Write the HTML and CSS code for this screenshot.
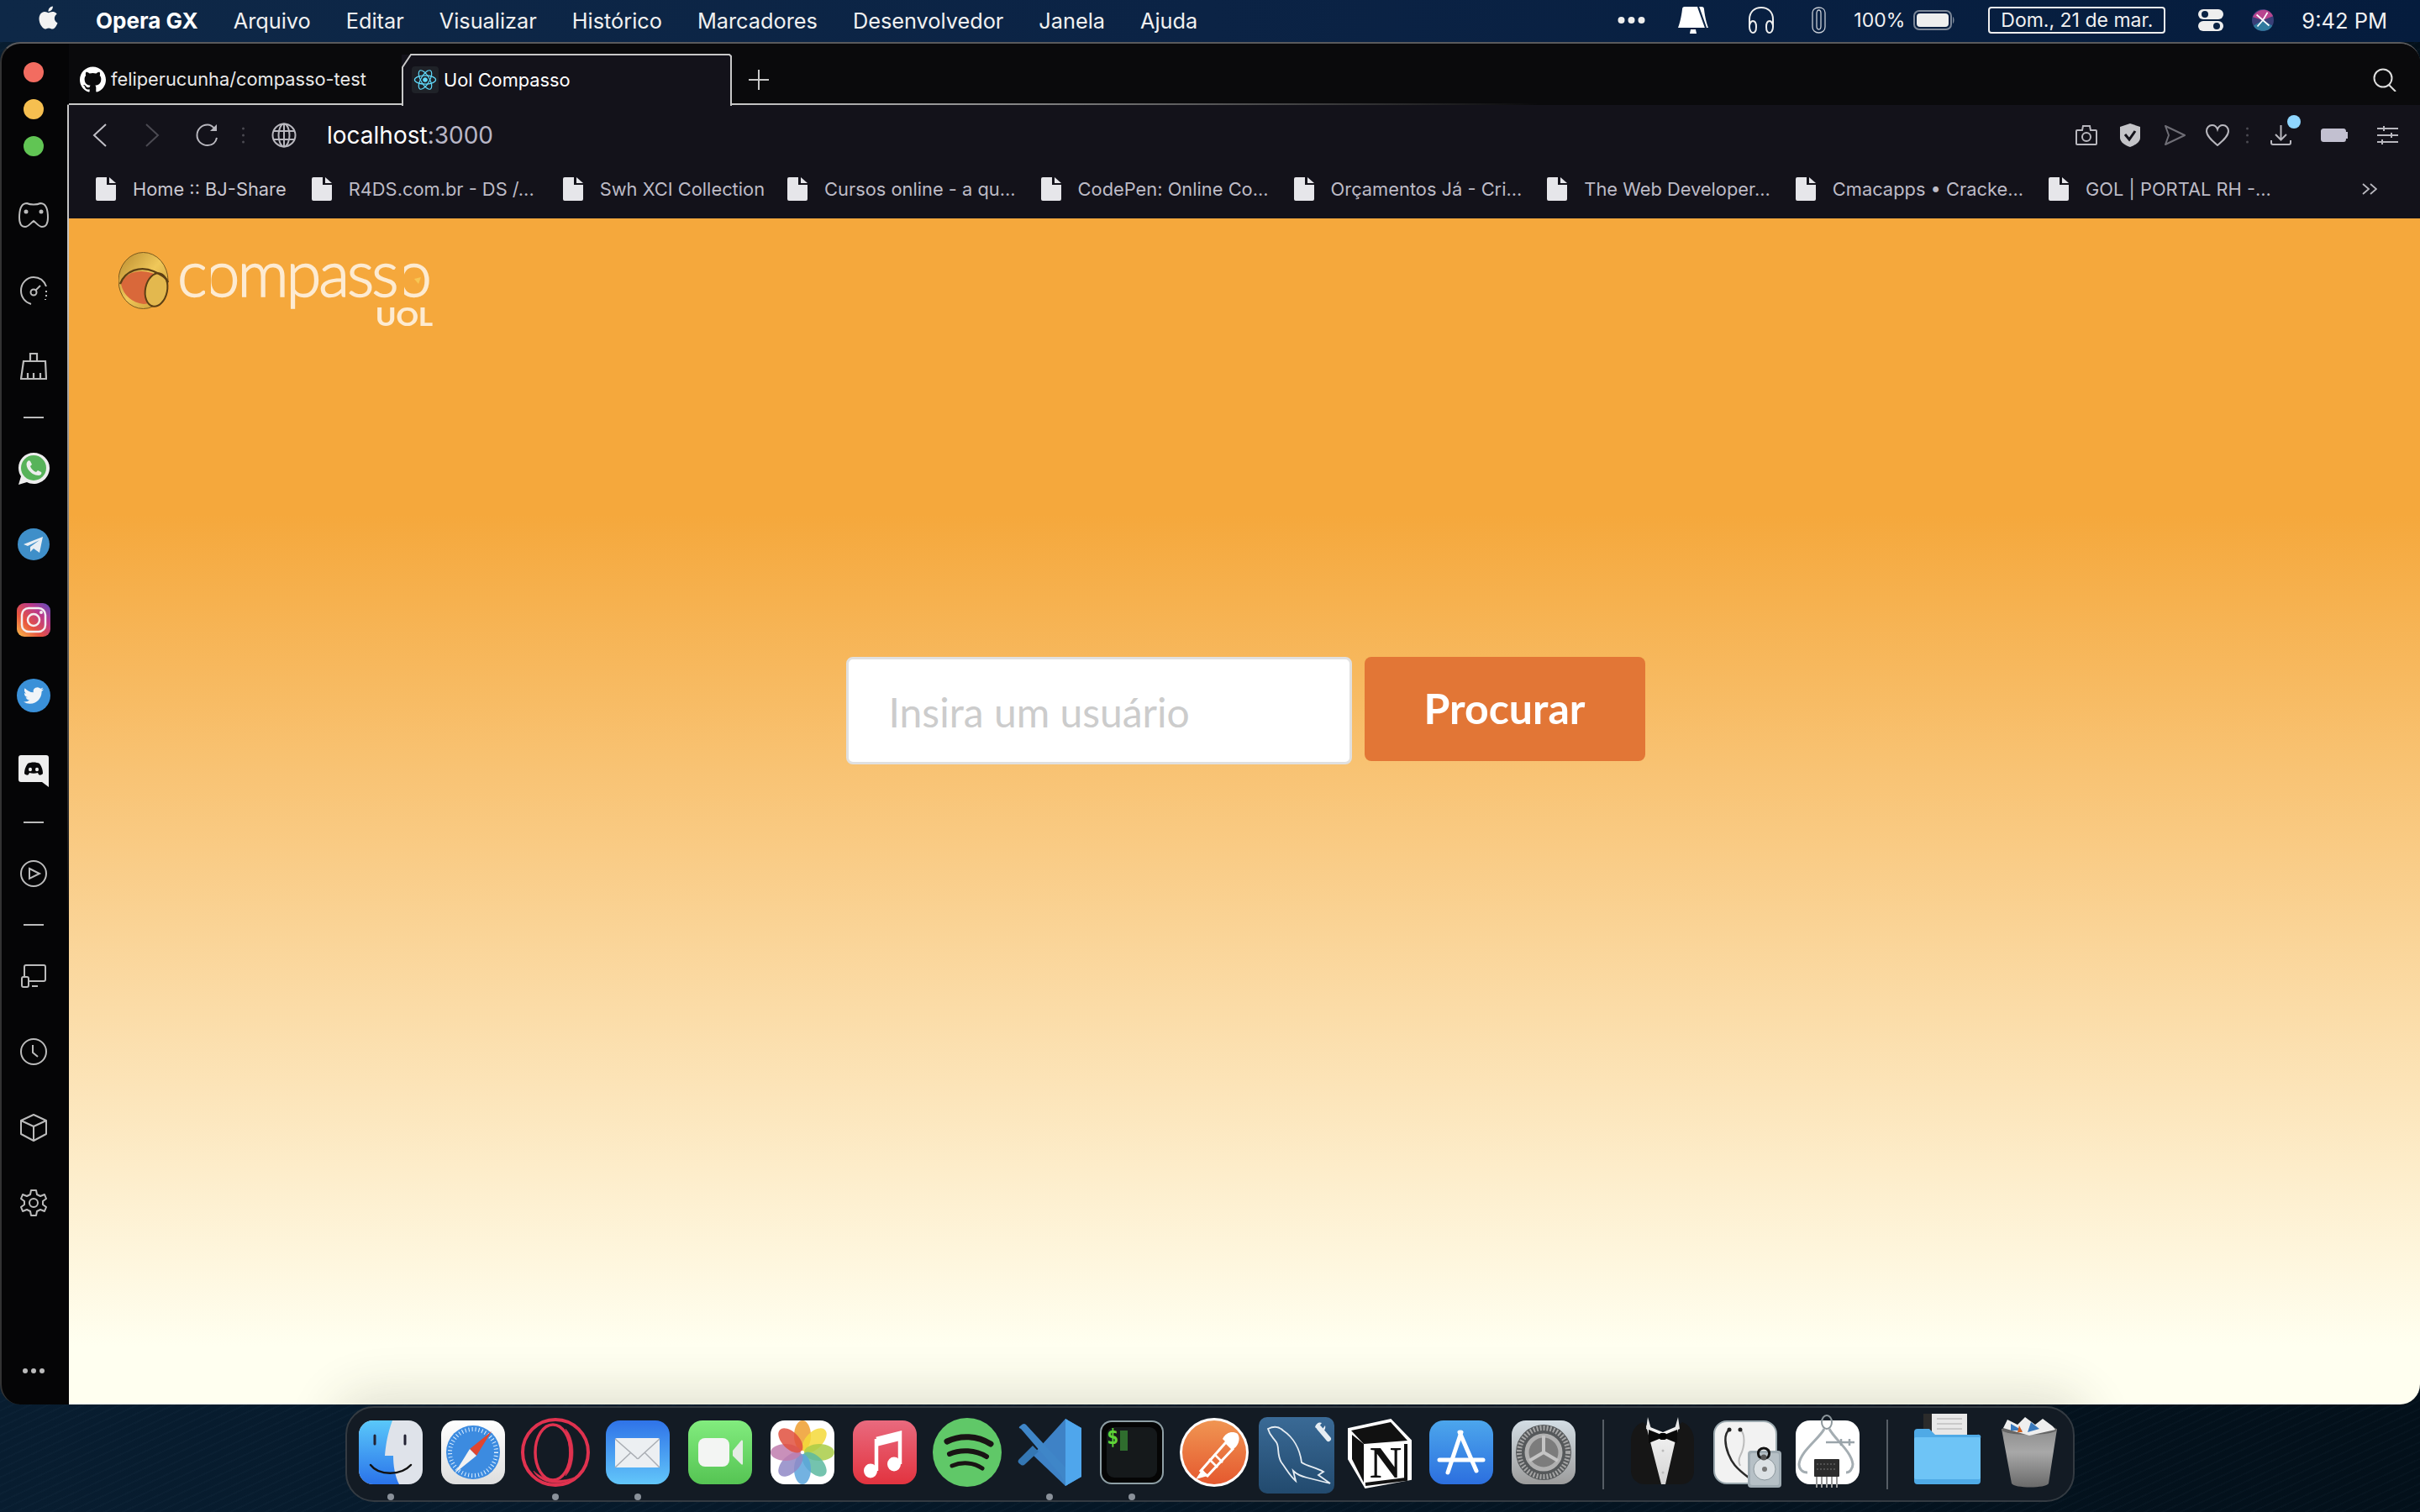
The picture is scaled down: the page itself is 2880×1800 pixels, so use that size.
FILE: index.html
```html
<!DOCTYPE html>
<html lang="pt-BR">
<head>
<meta charset="utf-8">
<title>Uol Compasso</title>
<link rel="stylesheet" href="styles.css">
</head>
<body>
<svg class="defs" width="0" height="0">
  <defs>
    <symbol id="file" viewBox="0 0 24 28"><path d="M2 0H13V9H24V26a2 2 0 0 1-2 2H2a2 2 0 0 1-2-2V2a2 2 0 0 1 2-2Z" fill="#e6e6ea"/><path d="M16 0L24 7H16Z" fill="#e6e6ea"/></symbol>
    <linearGradient id="igr" x1="0" y1="1" x2="1" y2="0"><stop offset="0" stop-color="#f9c04a"/><stop offset=".35" stop-color="#e8543e"/><stop offset=".7" stop-color="#b93a8e"/><stop offset="1" stop-color="#5a50c0"/></linearGradient>
    <linearGradient id="finderL" x1="0" y1="0" x2="0" y2="1"><stop offset="0" stop-color="#5ac8fa"/><stop offset="1" stop-color="#2a73ea"/></linearGradient>
    <linearGradient id="mailG" x1="0" y1="0" x2="0" y2="1"><stop offset="0" stop-color="#2f73e8"/><stop offset="1" stop-color="#62c6fa"/></linearGradient>
    <linearGradient id="ftG" x1="0" y1="0" x2="0" y2="1"><stop offset="0" stop-color="#82ec7e"/><stop offset="1" stop-color="#55c453"/></linearGradient>
    <linearGradient id="musG" x1="0" y1="0" x2="0" y2="1"><stop offset="0" stop-color="#e96a7e"/><stop offset="1" stop-color="#e2333f"/></linearGradient>
    <linearGradient id="posG" x1="0" y1="0" x2="0" y2="1"><stop offset="0" stop-color="#f09552"/><stop offset="1" stop-color="#e5592f"/></linearGradient>
    <linearGradient id="sqlG" x1="0" y1="0" x2="0" y2="1"><stop offset="0" stop-color="#3a6a96"/><stop offset="1" stop-color="#224a6e"/></linearGradient>
    <linearGradient id="appG" x1="0" y1="0" x2="0" y2="1"><stop offset="0" stop-color="#4ca6ec"/><stop offset="1" stop-color="#2c6fdf"/></linearGradient>
    <linearGradient id="setG" x1="0" y1="0" x2="0" y2="1"><stop offset="0" stop-color="#d3dde4"/><stop offset="1" stop-color="#9c9c9c"/></linearGradient>
    <linearGradient id="trG" x1="0" y1="0" x2="0" y2="1"><stop offset="0" stop-color="#8e8e8e"/><stop offset=".4" stop-color="#a8a8a8"/><stop offset="1" stop-color="#6a6a6a"/></linearGradient>
    <linearGradient id="goldG" x1="0" y1="0" x2="1" y2="1"><stop offset="0" stop-color="#b98a2e"/><stop offset=".5" stop-color="#f0c85a"/><stop offset="1" stop-color="#c4922e"/></linearGradient>
    <linearGradient id="safG" x1="0" y1="0" x2="0" y2="1"><stop offset="0" stop-color="#ffffff"/><stop offset="1" stop-color="#dedede"/></linearGradient>
    <linearGradient id="shirtG" x1="0" y1="0" x2="0" y2="1"><stop offset="0" stop-color="#f6f6f6"/><stop offset="1" stop-color="#d4d4d4"/></linearGradient>
  </defs>
</svg>

<header class="menubar">
  <svg class="apple" viewBox="0 0 24 24" width="27" height="32"><path fill="#f2f2f2" d="M12.152 6.896c-.948 0-2.415-1.078-3.96-1.04-2.04.027-3.91 1.183-4.961 3.014-2.117 3.675-.546 9.103 1.519 12.09 1.013 1.454 2.208 3.09 3.792 3.039 1.52-.065 2.09-.987 3.935-.987 1.831 0 2.35.987 3.96.948 1.637-.026 2.676-1.48 3.676-2.948 1.156-1.688 1.636-3.325 1.662-3.415-.039-.013-3.182-1.221-3.22-4.857-.026-3.04 2.48-4.494 2.597-4.559-1.429-2.09-3.623-2.324-4.39-2.376-2-.156-3.675 1.09-4.61 1.09zM15.53 3.83c.843-1.012 1.4-2.427 1.245-3.83-1.207.052-2.662.805-3.532 1.818-.78.896-1.454 2.338-1.273 3.714 1.338.104 2.715-.688 3.559-1.701"/></svg>
  <nav class="menu">
    <span class="menu-app">Opera GX</span>
    <span>Arquivo</span><span>Editar</span><span>Visualizar</span><span>Histórico</span><span>Marcadores</span><span>Desenvolvedor</span><span>Janela</span><span>Ajuda</span>
  </nav>
  <div class="tray">
    <svg viewBox="0 0 33 10" width="33" height="10"><circle cx="4.500" cy="5" r="4" fill="#eee"/><circle cx="16.500" cy="5" r="4" fill="#eee"/><circle cx="28.500" cy="5" r="4" fill="#eee"/></svg>
    <svg class="ml39" viewBox="0 0 36 32" width="36" height="32"><path d="M5 3C5 1 6 0 8 0H28C30 0 31 1 31 3C32 12 34 20 36 25H0C2 20 4 12 5 3Z" fill="#fff"/><path d="M24 0L33 25" stroke="#0b2344" stroke-width="2.200"/><path d="M15 27H21L22 32H14Z" fill="#fff"/></svg>
    <svg class="ml47" viewBox="0 0 32 32" width="32" height="32" fill="none" stroke="#eee" stroke-width="2"><path d="M2 24V15C2 6 8 1 16 1S30 6 30 15V24"/><path d="M2 24C2 20 4 17 6 17C9 17 10 20 10 24S9 31 6 31C4 31 2 28 2 24Z"/><path d="M30 24C30 20 28 17 26 17C23 17 22 20 22 24S23 31 26 31C28 31 30 28 30 24Z"/></svg>
    <svg class="ml44" viewBox="0 0 17 32" width="17" height="32" fill="none" stroke="#c6ccd4" stroke-width="1.300"><path d="M11 8V23C11 26 10 27 8.500 27S6 26 6 23V8C6 5.500 7 4 8.500 4S11 5.500 11 8"/><path d="M1 8V24C1 28 4 31 8.500 31S16 28 16 24V7C16 3.500 13 1 8.500 1S1 3.500 1 7Z"/></svg>
    <span class="ml33 tray-pct">100%</span>
    <svg class="ml10" viewBox="0 0 50 24" width="50" height="24"><rect x="1" y="1" width="44" height="22" rx="6" fill="none" stroke="#7c8798" stroke-width="2"/><rect x="4" y="4" width="38" height="16" rx="4" fill="#eee"/><path d="M47 8C49 9 49 15 47 16Z" fill="#7c8798"/></svg>
    <span class="ml39 datebox">Dom., 21 de mar.</span>
    <svg class="ml39" viewBox="0 0 30 26" width="30" height="26"><rect x="0" y="0" width="30" height="12" rx="6" fill="#eee"/><circle cx="8" cy="6" r="4" fill="#0b2344"/><rect x="0" y="14" width="30" height="12" rx="6" fill="#eee"/><circle cx="22" cy="20" r="4" fill="#0b2344"/></svg>
    <svg class="ml34" viewBox="0 0 28 28" width="26" height="28"><circle cx="14" cy="14" r="14" fill="#3a3f78"/><path d="M1 10C6 -1 22 -3 27 9L14 14Z" fill="#b8468f"/><path d="M2 21C6 30 22 30 26 21L14 14Z" fill="#2f7a9e"/><path d="M14 14L7 22M14 14L20 4M14 14L6 7M14 14L22 21" stroke="#fff" stroke-width="1.800"/></svg>
    <span class="ml33 tray-time">9:42 PM</span>
  </div>
</header>

<main class="window">
  <aside class="sidebar">
    <div class="lights"><i class="light red"></i><i class="light yellow"></i><i class="light green"></i></div>
    <div class="side-item"><svg viewBox="0 0 36 30" width="36" height="30" fill="none" stroke="#bbb" stroke-width="2"><path d="M10 1C5 1 1 6 1 18C1 26 4 29 8 29C12 29 14 25 18 22C22 25 24 29 28 29C32 29 35 26 35 18C35 6 31 1 26 1C22 3 14 3 10 1Z"/><circle cx="9" cy="11" r="1.500" fill="#bbb"/><circle cx="27" cy="11" r="1.500" fill="#bbb"/></svg></div>
    <div class="side-item"><svg viewBox="0 0 32 36" width="32" height="36" fill="none" stroke="#bbb" stroke-width="2"><path d="M31 13C28 5 22 2 16 2C8 2 1 9 1 18C1 26 6 32 13 34"/><circle cx="16" cy="20" r="3.500"/><path d="M18 18L24 12"/><path d="M31 18V20M31 23V25M30 28V29" /></svg></div>
    <div class="side-item"><svg viewBox="0 0 32 32" width="32" height="32" fill="none" stroke="#bbb" stroke-width="2.200"><path d="M12 10V1H20V10"/><path d="M4 10H30L31 31H1Z"/><path d="M9 24V31M16 24V31M24 24V31"/></svg></div>
    <hr class="side-sep">
    <div class="side-item"><svg viewBox="0 0 38 38" width="38" height="38"><path d="M19 0C9 0 1 8 1 18C1 22 2 25 4 28L1 38L11 35C13 36 16 37 19 37C29 37 38 29 38 18C38 8 29 0 19 0Z" fill="#eee"/><circle cx="19" cy="18" r="15" fill="#58b35a"/><path d="M12 10C10 12 10 15 12 19C15 24 20 27 25 27C28 27 29 24 28 23L24 21L22 23C19 22 16 19 15 16L17 14L15 10C14 9 13 9 12 10Z" fill="#eee"/></svg></div>
    <div class="side-item"><svg viewBox="0 0 38 38" width="38" height="38"><circle cx="19" cy="19" r="19" fill="#3f8fc9"/><path d="M7 19L30 10L26 29L19 24L15 28L15 22L26 14L12 21Z" fill="#e8eef4"/></svg></div>
    <div class="side-item"><svg viewBox="0 0 40 40" width="40" height="40" fill="none"><rect width="40" height="40" rx="9" fill="url(#igr)"/><rect x="6" y="6" width="28" height="28" rx="8" stroke="#f4eef0" stroke-width="2.500"/><circle cx="20" cy="20" r="7" stroke="#f4eef0" stroke-width="2.500"/><circle cx="29" cy="11" r="2" fill="#f4eef0"/></svg></div>
    <div class="side-item"><svg viewBox="0 0 40 40" width="40" height="40"><circle cx="20" cy="20" r="20" fill="#3a90d8"/><svg x="8" y="8" width="24" height="24" viewBox="0 0 24 24"><path fill="#f0f4f8" d="M23.953 4.57a10 10 0 01-2.825.775 4.958 4.958 0 002.163-2.723c-.951.555-2.005.959-3.127 1.184a4.92 4.92 0 00-8.384 4.482C7.69 8.095 4.067 6.13 1.64 3.162a4.822 4.822 0 00-.666 2.475c0 1.71.87 3.213 2.188 4.096a4.904 4.904 0 01-2.228-.616v.06a4.923 4.923 0 003.946 4.827 4.996 4.996 0 01-2.212.085 4.936 4.936 0 004.604 3.417 9.867 9.867 0 01-6.102 2.105c-.39 0-.779-.023-1.17-.067a13.995 13.995 0 007.557 2.209c9.053 0 13.998-7.496 13.998-13.985 0-.21 0-.42-.015-.63A9.935 9.935 0 0024 4.59z"/></svg></svg></div>
    <div class="side-item"><svg viewBox="0 0 36 38" width="36" height="38"><path d="M3 0H33A3 3 0 0 1 36 3V38L28 32H3A3 3 0 0 1 0 29V3A3 3 0 0 1 3 0Z" fill="#eee"/><path d="M11 10C15 8 21 8 25 10C28 14 29 18 29 22C27 24 25 24 24 23L23 21C20 22 16 22 13 21L12 23C11 24 9 24 7 22C7 18 8 14 11 10Z" fill="#08080a"/><ellipse cx="14" cy="17" rx="2" ry="2.300" fill="#eee"/><ellipse cx="22" cy="17" rx="2" ry="2.300" fill="#eee"/></svg></div>
    <hr class="side-sep">
    <div class="side-item"><svg viewBox="0 0 32 32" width="32" height="32" fill="none" stroke="#bbb" stroke-width="2"><circle cx="16" cy="16" r="15"/><path d="M11 10L23 16L11 22Z"/></svg></div>
    <hr class="side-sep">
    <div class="side-item"><svg viewBox="0 0 30 28" width="30" height="28" fill="none" stroke="#bbb" stroke-width="2"><path d="M4 14V3A2 2 0 0 1 6 1H27A2 2 0 0 1 29 3V18A2 2 0 0 1 27 20H9"/><rect x="1" y="15" width="8" height="12" rx="2"/><path d="M13 26H20"/></svg></div>
    <div class="side-item"><svg viewBox="0 0 32 32" width="32" height="32" fill="none" stroke="#bbb" stroke-width="2"><circle cx="16" cy="16" r="15"/><path d="M15 8V17L21 22"/></svg></div>
    <div class="side-item"><svg viewBox="0 0 32 33" width="32" height="33" fill="none" stroke="#bbb" stroke-width="2" stroke-linejoin="round"><path d="M16 1L31 8V24L16 32L1 24V8Z"/><path d="M1 8L16 15L31 8M16 15V32"/></svg></div>
    <div class="side-item"><svg viewBox="0 0 32 32" width="32" height="32" fill="none" stroke="#bbb" stroke-width="2" stroke-linejoin="round"><path d="M13 1H19L20 6L24 8L29 6L31 11L27 14V18L31 21L29 26L24 24L20 26L19 31H13L12 26L8 24L3 26L1 21L5 18V14L1 11L3 6L8 8L12 6Z"/><ellipse cx="16" cy="16" rx="5" ry="5"/></svg></div>
    <div class="side-more"><i></i><i></i><i></i></div>
  </aside>

  <div class="browser">
    <div class="tabstrip">
      <div class="tab">
        <svg viewBox="0 0 24 24" width="31" height="31"><path fill="#fff" d="M12 .297c-6.63 0-12 5.373-12 12 0 5.303 3.438 9.8 8.205 11.385.6.113.82-.258.82-.577 0-.285-.01-1.04-.015-2.04-3.338.724-4.042-1.61-4.042-1.61C4.422 18.07 3.633 17.7 3.633 17.7c-1.087-.744.084-.729.084-.729 1.205.084 1.838 1.236 1.838 1.236 1.07 1.835 2.809 1.305 3.495.998.108-.776.417-1.305.76-1.605-2.665-.3-5.466-1.332-5.466-5.93 0-1.31.465-2.38 1.235-3.22-.135-.303-.54-1.523.105-3.176 0 0 1.005-.322 3.3 1.23.96-.267 1.98-.399 3-.405 1.02.006 2.04.138 3 .405 2.28-1.552 3.285-1.23 3.285-1.23.645 1.653.24 2.873.12 3.176.765.84 1.23 1.91 1.23 3.22 0 4.61-2.805 5.625-5.475 5.92.42.36.81 1.096.81 2.22 0 1.606-.015 2.896-.015 3.286 0 .315.21.69.825.57C20.565 22.092 24 17.592 24 12.297c0-6.627-5.373-12-12-12"/></svg>
        <span class="tab-title">feliperucunha/compasso-test</span>
      </div>
      <div class="tab-active">
        <svg class="tab-outline" viewBox="0 0 393 62" width="393" height="62" fill="none" stroke="#c8c8c8" stroke-width="2"><path d="M1 62V16L11 1H390L392 3V62"/></svg>
        <span class="favicon"><svg viewBox="-15 -15 30 30" width="28" height="30" fill="none" stroke="#61dafb" stroke-width="1.300"><ellipse rx="13.500" ry="5.500"/><ellipse rx="13.500" ry="5.500" transform="rotate(60)"/><ellipse rx="13.500" ry="5.500" transform="rotate(120)"/><circle r="2.400" fill="#61dafb"/></svg></span>
        <span class="tab-title">Uol Compasso</span>
      </div>
      <div class="tab-rest">
        <svg viewBox="0 0 24 24" width="24" height="24" stroke="#c8c8c8" stroke-width="2"><path d="M12 0V24M0 12H24"/></svg>
        <svg class="search" viewBox="0 0 28 28" width="28" height="28" fill="none" stroke="#ddd" stroke-width="2"><circle cx="12" cy="12" r="10.500"/><path d="M19 20L27 28"/></svg>
      </div>
    </div>

    <div class="toolbar">
      <svg viewBox="0 0 17 28" width="17" height="28" fill="none" stroke="#c0bfc6" stroke-width="2"><path d="M16 1L2 14L16 27"/></svg>
      <svg class="tl46" viewBox="0 0 17 28" width="17" height="28" fill="none" stroke="#4b4a52" stroke-width="2"><path d="M1 1L15 14L1 27"/></svg>
      <svg class="tl43" viewBox="0 0 27 27" width="27" height="27" fill="none" stroke="#b8b7be" stroke-width="2"><path d="M23 7C20 3 17 1.500 14 1.500C7 1.500 1.500 7 1.500 14S7 26 14 26C20 26 24 22 25 17"/><path d="M25 1V9H17" fill="#b8b7be" stroke="none"/></svg>
      <svg class="tl28" viewBox="0 0 3 22" width="3" height="22" fill="#4b4a52"><circle cx="1.500" cy="3" r="1.500"/><circle cx="1.500" cy="11" r="1.500"/><circle cx="1.500" cy="19" r="1.500"/></svg>
      <svg class="tl32" viewBox="0 0 30 30" width="30" height="30" fill="none" stroke="#b8b7be" stroke-width="2"><circle cx="15" cy="15" r="13.500"/><ellipse cx="15" cy="15" rx="6.500" ry="13.500"/><path d="M3 10H27M3 20H27M15 1V29"/></svg>
      <div class="address"><b>localhost</b>:3000</div>
      <div class="tool-right">
        <svg viewBox="0 0 26 24" width="26" height="24" fill="none" stroke="#b8b7be" stroke-width="2"><path d="M2 6H8L9 1H17L18 6H24A1 1 0 0 1 25 7V22A1 1 0 0 1 24 23H2A1 1 0 0 1 1 22V7A1 1 0 0 1 2 6Z"/><circle cx="13" cy="14" r="5"/></svg>
        <svg class="tl27" viewBox="0 0 24 28" width="24" height="28"><path d="M12 0L24 4V17C24 22 18 26 12 28C6 26 0 22 0 17V4Z" fill="#c4c4c8"/><path d="M6 13L11 19L18 9" stroke="#13121a" stroke-width="3" fill="none"/></svg>
        <svg class="tl29" viewBox="0 0 25 24" width="25" height="24" fill="none" stroke="#6f6e76" stroke-width="2" stroke-linejoin="round"><path d="M1 1L24 12L1 23L5 12Z"/></svg>
        <svg class="tl24" viewBox="0 0 28 26" width="28" height="26" fill="none" stroke="#b8b7be" stroke-width="2"><path d="M14 25C8 20 1 14 1 8C1 4 4 1 7.500 1C10.500 1 13 3 14 6C15 3 17.500 1 20.500 1C24 1 27 4 27 8C27 14 20 20 14 25Z"/></svg>
        <svg class="tl20" viewBox="0 0 3 22" width="3" height="22" fill="#4b4a52"><circle cx="1.500" cy="3" r="1.500"/><circle cx="1.500" cy="11" r="1.500"/><circle cx="1.500" cy="19" r="1.500"/></svg>
        <span class="download tl26">
          <svg viewBox="0 0 25 24" width="25" height="24" fill="none" stroke="#b8b7be" stroke-width="2"><path d="M12.500 0V17M6 11L12.500 17.500L19 11"/><path d="M1 18V21A2 2 0 0 0 3 23H22A2 2 0 0 0 24 21V18"/></svg>
          <i class="badge"></i>
        </span>
        <svg class="tl35" viewBox="0 0 32 16" width="32" height="16"><path d="M4 0H27C29 0 30 1 30 4H32V12H30C30 15 29 16 27 16H4C1 16 0 15 0 12V4C0 1 1 0 4 0Z" fill="#c2c0d0"/></svg>
        <svg class="tl35" viewBox="0 0 25 22" width="25" height="22" stroke="#b8b7be" stroke-width="2"><path d="M0 3H25M0 11H25M0 19H25"/><path d="M8 0V6M17 8V14M6 16V22"/></svg>
      </div>
    </div>

    <div class="bookmarks">
      <a class="bm"><svg width="24" height="28"><use href="#file"/></svg><span class="first">Home :: BJ-Share</span></a>
      <a class="bm"><svg width="24" height="28"><use href="#file"/></svg><span>R4DS.com.br - DS /...</span></a>
      <a class="bm bm-swh"><svg width="24" height="28"><use href="#file"/></svg><span>Swh XCI Collection</span></a>
      <a class="bm"><svg width="24" height="28"><use href="#file"/></svg><span>Cursos online - a qu...</span></a>
      <a class="bm"><svg width="24" height="28"><use href="#file"/></svg><span>CodePen: Online Co...</span></a>
      <a class="bm"><svg width="24" height="28"><use href="#file"/></svg><span>Orçamentos Já - Cri...</span></a>
      <a class="bm"><svg width="24" height="28"><use href="#file"/></svg><span>The Web Developer...</span></a>
      <a class="bm"><svg width="24" height="28"><use href="#file"/></svg><span>Cmacapps • Cracke...</span></a>
      <a class="bm"><svg width="24" height="28"><use href="#file"/></svg><span>GOL | PORTAL RH -...</span></a>
      <svg class="bm-more" viewBox="0 0 18 14" width="18" height="14" fill="none" stroke="#b8b7be" stroke-width="1.800"><path d="M1 1L8 7L1 13M10 1L17 7L10 13"/></svg>
    </div>

    <section class="page">
      <div class="logo">
        <svg viewBox="0 0 380 100" width="380" height="100">
          <g>
            <ellipse cx="29.500" cy="34" rx="29.500" ry="33.500" fill="url(#goldG)" stroke="#7a5a1e" stroke-width="1"/>
            <path d="M3 38C8 24 24 20 40 25C48 29 54 34 57 38C52 52 42 62 30 62C16 60 6 52 3 38Z" fill="#d9683a"/>
            <ellipse cx="45" cy="45" rx="13" ry="20" fill="#e3b84e" stroke="#5c3f14" stroke-width="2" transform="rotate(12 45 45)"/>
            <path d="M2 38C8 22 26 16 42 23C50 27 57 30 59 36" fill="none" stroke="#5c3f14" stroke-width="2.200"/>
          </g>
          <text class="logo-word" x="70" y="53" textLength="303" lengthAdjust="spacing">compasso</text>
          <rect class="logo-gap" x="103" y="8" width="7" height="50"/>
          <rect class="logo-gap" x="333" y="8" width="7" height="50"/>
          <path d="M352 32L360 30L357 38Z" fill="#f7c654"/>
          <text class="logo-uol" x="306" y="88" textLength="68" lengthAdjust="spacingAndGlyphs">UOL</text>
        </svg>
      </div>
      <form class="search-form">
        <input class="user-input" type="text" placeholder="Insira um usuário">
        <button class="submit" type="button">Procurar</button>
      </form>
    </section>
  </div>
</main>

<footer class="dock-row">
  <nav class="dock">
    <div class="app"><svg viewBox="-4 -4 84 84"><rect width="76" height="76" rx="17" fill="#dfe3ea"/><path d="M17 0H40C34 16 32 30 31 42H41C41 54 43 66 48 76H17A17 17 0 0 1 0 59V17A17 17 0 0 1 17 0Z" fill="url(#finderL)"/><path d="M19 18V28M55 18V28" stroke="#223" stroke-width="3" stroke-linecap="round"/><path d="M14 53C24 66 50 66 62 53" fill="none" stroke="#111" stroke-width="2.500" stroke-linecap="round"/></svg><i class="run"></i></div>
    <div class="app"><svg viewBox="-4 -4 84 84"><rect width="76" height="76" rx="17" fill="url(#safG)"/><circle cx="38" cy="38" r="32" fill="#3c8be0"/><circle cx="38" cy="38" r="27.500" fill="none" stroke="#dff0ff" stroke-width="5" stroke-dasharray="1 3"/><path d="M60 13L34 34L42 42Z" fill="#e0452f"/><path d="M16 63L42 42L34 34Z" fill="#f2f2f2"/></svg><i class="run off"></i></div>
    <div class="app"><svg viewBox="-4 -4 84 84" fill="none" stroke="#e0324f"><circle cx="38" cy="38" r="39" stroke-width="4"/><ellipse cx="35" cy="38" rx="21" ry="33" stroke-width="3.500"/><path d="M50 10C62 22 62 54 50 66C56 50 56 28 50 10Z" fill="#e0324f" stroke-width=".6"/><path d="M12 60C18 74 44 80 60 68C44 74 24 72 12 60Z" fill="#e0324f" stroke-width=".6"/></svg><i class="run"></i></div>
    <div class="app"><svg viewBox="-4 -4 84 84"><rect width="76" height="76" rx="17" fill="url(#mailG)"/><rect x="11" y="21" width="53" height="35" rx="2" fill="#eceff2"/><path d="M11 22L36 44C37 46 39 46 40 44L64 22M11 56L30 38M64 56L46 38" fill="none" stroke="#a9adb3" stroke-width="1.500"/></svg><i class="run"></i></div>
    <div class="app"><svg viewBox="-4 -4 84 84"><rect width="76" height="76" rx="17" fill="url(#ftG)"/><rect x="12" y="21" width="37" height="34" rx="8" fill="#f3f5f3"/><path d="M53 36L63 24C64 23 65 24 65 25V51C65 53 64 53 63 52L53 42Z" fill="#e4ece4"/></svg><i class="run off"></i></div>
    <div class="app"><svg viewBox="-4 -4 84 84"><rect width="76" height="76" rx="17" fill="#fff"/><g transform="translate(38 38)"><ellipse cy="-20" rx="10" ry="18" fill="#f0a33a" opacity=".9"/><ellipse cy="-20" rx="10" ry="18" fill="#f5d93a" opacity=".85" transform="rotate(45)"/><ellipse cy="-20" rx="10" ry="18" fill="#a9cc46" opacity=".85" transform="rotate(90)"/><ellipse cy="-20" rx="10" ry="18" fill="#5cb8a0" opacity=".85" transform="rotate(135)"/><ellipse cy="-20" rx="10" ry="18" fill="#5aa5dc" opacity=".85" transform="rotate(180)"/><ellipse cy="-20" rx="10" ry="18" fill="#8f88c6" opacity=".85" transform="rotate(225)"/><ellipse cy="-20" rx="10" ry="18" fill="#c07cae" opacity=".85" transform="rotate(270)"/><ellipse cy="-20" rx="10" ry="18" fill="#e0503e" opacity=".85" transform="rotate(315)"/><circle r="1.500" fill="#fff"/></g></svg><i class="run off"></i></div>
    <div class="app"><svg viewBox="-4 -4 84 84"><rect width="76" height="76" rx="17" fill="url(#musG)"/><path d="M28 22L56 15V52" fill="none" stroke="#fff" stroke-width="4.500"/><path d="M28 22V60" stroke="#fff" stroke-width="4.500"/><path d="M28 22L56 15V24L28 31Z" fill="#fff"/><ellipse cx="21" cy="60" rx="8" ry="8.500" fill="#fff"/><ellipse cx="49" cy="52" rx="8" ry="8.500" fill="#fff"/></svg><i class="run off"></i></div>
    <div class="app"><svg viewBox="-4 -4 84 84"><circle cx="38" cy="38" r="41" fill="#60c868"/><g fill="none" stroke="#191414" stroke-linecap="round"><path d="M14 25C30 17 50 18 66 28" stroke-width="7"/><path d="M17 40C30 34 48 35 61 43" stroke-width="6"/><path d="M20 54C32 49 46 50 56 57" stroke-width="5"/></g></svg><i class="run off"></i></div>
    <div class="app"><svg viewBox="-4 -4 84 84"><path d="M57 -2L76 9V67L57 78L18 41Z" fill="#3e82c6"/><path d="M57 -2L76 9V67L57 78Z" fill="#4fa6ec"/><path d="M4 10L52 66L57 78V56L10 5C8 3 6 4 4 6C1 8 1 9 4 10Z" fill="#3f86c8"/><path d="M2 46L18 30L25 37L9 52C7 54 5 54 3 52C0 50 0 48 2 46Z" fill="#3477b4"/></svg><i class="run"></i></div>
    <div class="app"><svg viewBox="-4 -4 84 84"><rect width="76" height="76" rx="14" fill="#8fa0a6"/><rect x="2" y="2" width="72" height="72" rx="12" fill="#050505"/><rect x="8" y="8" width="60" height="60" rx="9" fill="#15191b"/><text class="term" x="8" y="28">$</text><rect x="24" y="12" width="9" height="24" fill="#2f6d2e"/></svg><i class="run"></i></div>
    <div class="app"><svg viewBox="-4 -4 84 84"><circle cx="38" cy="38" r="41" fill="#fff"/><circle cx="38" cy="38" r="38" fill="url(#posG)"/><path d="M22 60L52 26L60 34L30 66Z" fill="none" stroke="#fff" stroke-width="3"/><path d="M48 22C52 14 60 12 66 16C70 22 66 32 60 34Z" fill="#fff"/><path d="M16 70L24 58L30 66Z" fill="#fff"/><path d="M32 46L42 56M38 40L48 50" stroke="#fff" stroke-width="2.500"/></svg><i class="run off"></i></div>
    <div class="app"><svg viewBox="-4 -4 84 84"><rect x="-7" y="-4" width="90" height="91" rx="10" fill="url(#sqlG)"/><path d="M4 10C12 6 18 8 22 12C34 20 42 34 44 50C50 54 60 56 70 61L64 65L78 75C66 72 58 70 50 68C42 66 36 62 34 60L37 72C30 66 26 58 20 50C14 40 18 32 14 26C10 20 6 18 4 10Z" fill="none" stroke="#e6edf3" stroke-width="1.800"/><path d="M65 9L76 22" stroke="#e6edf3" stroke-width="6" stroke-linecap="round"/><path d="M60 8C62 2 66 2 68 3L65 7L69 10L72 6C73 10 71 14 66 13Z" fill="#e6edf3"/></svg><i class="run off"></i></div>
    <div class="app"><svg viewBox="-4 -4 84 84"><path d="M2 10L52 -1L76 24L76 70L22 80L2 46Z" fill="#fff" stroke="#fff" stroke-width="2"/><path d="M5 12L52 2L72 24L20 28Z" fill="#111"/><path d="M6 17L20 28V74L6 46Z" fill="#111"/><path d="M70 28V70L22 76" fill="none" stroke="#111" stroke-width="4"/><text class="notion" x="46" y="68" text-anchor="middle">N</text></svg><i class="run off"></i></div>
    <div class="app"><svg viewBox="-4 -4 84 84"><rect width="76" height="76" rx="17" fill="url(#appG)"/><g stroke="#fff" stroke-width="5" stroke-linecap="round"><path d="M38 14L22 62M36 14L56 60"/><path d="M12 47H64"/></g></svg><i class="run off"></i></div>
    <div class="app"><svg viewBox="-4 -4 84 84" fill="none"><rect width="76" height="76" rx="17" fill="url(#setG)"/><circle cx="38" cy="38" r="33" fill="#55585a"/><circle cx="38" cy="38" r="29" stroke="#a6a6a6" stroke-width="6" stroke-dasharray="2 2"/><circle cx="38" cy="38" r="20" stroke="#b0b0b0" stroke-width="5" fill="#7c7c7c"/><path d="M38 38V18M38 38L21 48M38 38L55 48" stroke="#c4c4c4" stroke-width="4"/></svg><i class="run off"></i></div>
    <span class="dock-sep"></span>
    <div class="app"><svg viewBox="-4 -4 84 84"><path d="M14 2C5 5 0 14 0 24V60C0 70 8 76 16 76H60C68 76 75 70 75 60V24C75 14 70 5 61 2L38 20Z" fill="#161616"/><path d="M18 6L38 14L57 6L41 76H36Z" fill="url(#shirtG)"/><path d="M20 -4L24 10L36 18L18 10ZM56 -4L52 10L40 18L58 10Z" fill="#e8e8e8"/><path d="M21 11L36 17V21L21 27ZM55 11L40 17V21L55 27Z" fill="#0a0a0a"/><rect x="34" y="15" width="8" height="8" rx="2" fill="#000"/><circle cx="38" cy="36" r="1.500" fill="#bbb"/><circle cx="38" cy="62" r="1.500" fill="#bbb"/></svg><i class="run off"></i></div>
    <div class="app"><svg viewBox="-4 -4 84 84" fill="none"><rect x="1" y="1" width="74" height="74" rx="15" fill="#f2f2f2" stroke="#9aa8ae" stroke-width="2"/><path d="M19 11C12 16 14 30 18 40C22 50 26 56 42 68" stroke="#2a2a2a" stroke-width="2.500"/><path d="M32 11C38 16 38 30 32 42C30 46 30 50 32 54" stroke="#bcbcbc" stroke-width="2"/><circle cx="19" cy="11" r="2.500" fill="#222"/><circle cx="32" cy="11" r="2.500" fill="#222"/><rect x="41" y="36" width="40" height="44" rx="4" fill="#9fabb2"/><rect x="44" y="39" width="34" height="38" rx="2" fill="#b6c0c6"/><circle cx="61" cy="58" r="13" fill="#dce1e4" stroke="#8d989e"/><circle cx="61" cy="58" r="3" fill="#777"/><path d="M54 42C50 30 70 30 66 42C65 46 56 46 54 42Z" stroke="#111" stroke-width="3"/><circle cx="60" cy="44" r="3.500" fill="#555"/></svg><i class="run off"></i></div>
    <div class="app"><svg viewBox="-4 -4 84 84" fill="none"><rect width="76" height="76" rx="17" fill="#fff"/><ellipse cx="37" cy="2" rx="6" ry="8" stroke="#8d979c" stroke-width="2"/><path d="M34 10C28 22 6 36 4 52C4 58 8 62 14 62" stroke="#a4adb2" stroke-width="3"/><path d="M40 10C46 22 66 36 68 52C68 58 64 62 60 62" stroke="#a4adb2" stroke-width="3"/><path d="M36 26H70M64 22V30M54 22V30" stroke="#9aa4aa" stroke-width="2.500"/><rect x="22" y="46" width="30" height="21" rx="1" fill="#2c2c2c"/><path d="M25 52H49M25 58H49" stroke="#777" stroke-dasharray="2 2"/><path d="M25 67V80M31 67V80M37 67V80M43 67V80M49 67V80" stroke="#999" stroke-width="2"/></svg><i class="run off"></i></div>
    <span class="dock-sep"></span>
    <div class="app"><svg viewBox="-4 -4 84 84"><rect x="10" y="-8" width="18" height="26" fill="#2b2b2b"/><rect x="20" y="-8" width="42" height="34" fill="#e8e8e8"/><path d="M26 -2H56M26 4H56M26 10H56" stroke="#aaa"/><path d="M-1 14A4 4 0 0 1 3 10H17L24 17H74A3 3 0 0 1 78 21V72A4 4 0 0 1 74 76H3A4 4 0 0 1 -1 72Z" fill="#4faae6"/><rect x="-1" y="20" width="79" height="50" rx="2" fill="#6ec4f6"/></svg><i class="run off"></i></div>
    <div class="app"><svg viewBox="-4 -4 84 84"><path d="M5 10L71 10L61 75C58 81 20 81 17 75Z" fill="url(#trG)"/><ellipse cx="38" cy="11" rx="33" ry="6" fill="#666"/><path d="M7 9L12 -1L24 5L33 -4L45 5L54 -2L66 7L69 11L38 18Z" fill="#eee"/><path d="M16 4L30 12H16ZM40 2L50 10L36 14Z" fill="#3a7abd"/><path d="M26 6L30 14H24Z" fill="#d46020"/></svg><i class="run off"></i></div>
  </nav>
</footer>
</body>
</html>
```
FILE: styles.css
```css
* { box-sizing: border-box; }
html, body { margin: 0; padding: 0; }
body {
  width: 2880px;
  height: 1800px;
  overflow: hidden;
  display: flex;
  flex-direction: column;
  font-family: Inter, "Liberation Sans", sans-serif;
  color: #fff;
  background:
    repeating-linear-gradient(155deg, rgba(110,150,180,.03) 0 2px, transparent 2px 9px),
    linear-gradient(90deg, #081d30 0%, #051726 45%, #03101a 100%);
}
.defs { position: absolute; }
svg { display: block; flex: none; }

/* macOS menu bar */
.menubar {
  height: 50px;
  flex: none;
  display: flex;
  align-items: center;
  padding: 0 39px 2px 44px;
  background: linear-gradient(90deg, #0e2847 0%, #0b2345 50%, #051c3d 100%);
  font-size: 25.300px;
  color: #f1f1f1;
}
.apple { margin-top: -6px; }
.menu { display: flex; gap: 42px; margin-left: 43px; white-space: nowrap; }
.menu-app { font-weight: 700; color: #fff; font-size: 26px; }
.tray { margin-left: auto; display: flex; align-items: center; white-space: nowrap; }
.tray-pct { font-size: 23px; }
.tray-time { font-size: 25.500px; }
.ml10 { margin-left: 10px; }
.ml33 { margin-left: 33px; }
.ml34 { margin-left: 34px; }
.ml39 { margin-left: 39px; }
.ml44 { margin-left: 44px; }
.ml47 { margin-left: 47px; }
.datebox {
  width: 211px;
  height: 32px;
  border: 2px solid #eee;
  border-radius: 4px;
  font-size: 23px;
  line-height: 28px;
  text-align: center;
}

/* browser window */
.window {
  height: 1622px;
  flex: none;
  display: flex;
  background: #050506;
  border-radius: 24px;
  border-top: 2px solid #5a5a5c;
  border-left: 2px solid #333;
  overflow: hidden;
}
.sidebar {
  width: 78px;
  flex: none;
  display: flex;
  flex-direction: column;
  align-items: center;
  padding-bottom: 37px;
}
.lights { height: 159px; padding-top: 22px; display: flex; flex-direction: column; gap: 20px; margin-left: -2px; }
.light { width: 24px; height: 24px; border-radius: 50%; }
.red { background: #f26c60; }
.yellow { background: #f6bf50; }
.green { background: #61c554; }
.side-item { height: 90px; display: flex; align-items: center; justify-content: center; margin-left: -2px; flex: none; }
.side-sep { width: 24px; height: 2px; margin: 15px 0; border: 0; background: #bbb; margin-left: -2px; flex: none; }
.side-more { margin-top: auto; display: flex; gap: 4px; margin-left: -2px; }
.side-more i { width: 6px; height: 6px; border-radius: 50%; background: #bbb; }

.browser {
  flex: 1;
  min-width: 0;
  display: flex;
  flex-direction: column;
  border-left: 2px solid;
  border-image: linear-gradient(180deg, transparent 0 73px, #c8c8c8 74px, #c0c0c0 300px, rgba(190,190,190,0) 1050px) 1;
}
.tabstrip {
  height: 73px;
  flex: none;
  display: flex;
  background: #0a0a0c;
  font-size: 21.800px;
  white-space: nowrap;
}
.tab {
  width: 396px;
  display: flex;
  align-items: center;
  gap: 6px;
  padding: 13px 0 0 13px;
  border-bottom: 2px solid #c8c8c8;
  color: #e8e8e8;
}
.tab-active {
  position: relative;
  width: 393px;
  margin-top: 13px;
  background: #13121a;
  display: flex;
  align-items: center;
  gap: 6px;
  padding: 0 0 0 12px;
  height: 60px;
}
.tab-outline { position: absolute; left: 0; top: -1px; }
.favicon {
  width: 32px;
  height: 32px;
  border-radius: 4px;
  background: #1f2228;
  display: flex;
  align-items: center;
  justify-content: center;
}
.tab-rest {
  flex: 1;
  display: flex;
  align-items: center;
  padding: 13px 28px 0 20px;
  position: relative;
}
.tab-rest::after {
  content: "";
  position: absolute;
  left: 0;
  bottom: 0;
  width: 960px;
  height: 2px;
  background: linear-gradient(90deg, #c8c8c8, rgba(200,200,200,0));
}
.search { margin-left: auto; }

.toolbar {
  height: 71px;
  flex: none;
  display: flex;
  align-items: center;
  padding: 0 26px 0 28px;
  background: #13121a;
}
.tl20 { margin-left: 20px; }
.tl24 { margin-left: 24px; }
.tl26 { margin-left: 26px; }
.tl27 { margin-left: 27px; }
.tl28 { margin-left: 28px; }
.tl29 { margin-left: 29px; }
.tl32 { margin-left: 32px; }
.tl35 { margin-left: 35px; }
.tl43 { margin-left: 43px; }
.tl46 { margin-left: 46px; }
.address { margin-left: 36px; font-size: 28px; color: #b8b6c6; }
.address b { font-weight: 400; color: #fff; }
.tool-right { margin-left: auto; display: flex; align-items: center; }
.download { position: relative; display: block; }
.badge {
  position: absolute;
  right: -11px;
  top: -12px;
  width: 16px;
  height: 16px;
  border-radius: 50%;
  background: #8fd6ff;
}

.bookmarks {
  height: 64px;
  flex: none;
  display: flex;
  align-items: center;
  gap: 30px;
  padding: 0 51px 6px 32px;
  background: #13121a;
  font-size: 21.850px;
  color: #bdbbc6;
  white-space: nowrap;
}
.bm { display: flex; align-items: center; gap: 20px; }
.bm .first { color: #c9c7d0; }
.bm-swh { margin: 0 -3px 0 4px; }
.bm-more { margin-left: auto; }

/* page content */
.page {
  flex: 1;
  min-height: 0;
  position: relative;
  overflow: hidden;
  border-radius: 0 0 20px 0;
  padding: 40px 0 0 59px;
  background: linear-gradient(180deg, #f5a83c 25%, #fffff0 95%);
}
.page::after {
  content: "";
  position: absolute;
  left: 330px;
  width: 2058px;
  top: 1414px;
  height: 110px;
  border-radius: 30px;
  box-shadow: 0 0 60px 14px rgba(50,50,40,.16);
}
.logo { height: 90px; }
.logo svg { filter: blur(.5px); }
.logo-word { font-family: Lato, sans-serif; font-weight: 300; font-size: 76px; fill: #fdebd2; stroke: #fdebd2; stroke-width: 1.500px; }
.logo-gap { fill: #f5a83c; }
.logo-uol { font-family: Lato, sans-serif; font-weight: 900; font-size: 30px; fill: #fdebd2; }

.search-form {
  margin: 392px 0 0 -59px;
  padding-left: 2px;
  display: flex;
  justify-content: center;
  align-items: flex-start;
  gap: 15px;
  font-family: Lato, sans-serif;
}
.user-input {
  width: 602px;
  height: 128px;
  padding: 2px 48px 0;
  border: 3px solid #e0e0e0;
  border-radius: 8px;
  background: #fff;
  font: 400 48px Lato, sans-serif;
  outline: none;
}
.user-input::placeholder { color: #ccc; opacity: 1; }
.submit {
  width: 334px;
  height: 124px;
  padding: 0 0 2px;
  border: 0;
  border-radius: 8px;
  background: #e27636;
  color: #fff;
  font: 700 50px Lato, sans-serif;
}

/* dock */
.dock-row {
  flex: 1;
  display: flex;
  justify-content: center;
  align-items: flex-start;
  padding-top: 2px;
}
.dock {
  width: 2058px;
  height: 114px;
  display: flex;
  align-items: flex-start;
  gap: 14px;
  padding: 11px 10px 0;
  border: 2px solid #343b42;
  border-radius: 34px;
  background: #131b24;
}
.app { width: 84px; display: flex; flex-direction: column; align-items: center; gap: 7px; flex: none; }
.app svg { width: 84px; height: 84px; overflow: visible; }
.run { width: 8px; height: 8px; border-radius: 50%; background: #8a919a; }
.run.off { visibility: hidden; }
.dock-sep { width: 2px; height: 83px; margin: 3px 14px 0; background: #565d65; flex: none; }
.term { font-family: "DejaVu Sans Mono", monospace; font-size: 24px; font-weight: 700; fill: #5fd438; }
.notion { font-family: "Liberation Serif", serif; font-size: 52px; font-weight: 700; fill: #111; }
```
